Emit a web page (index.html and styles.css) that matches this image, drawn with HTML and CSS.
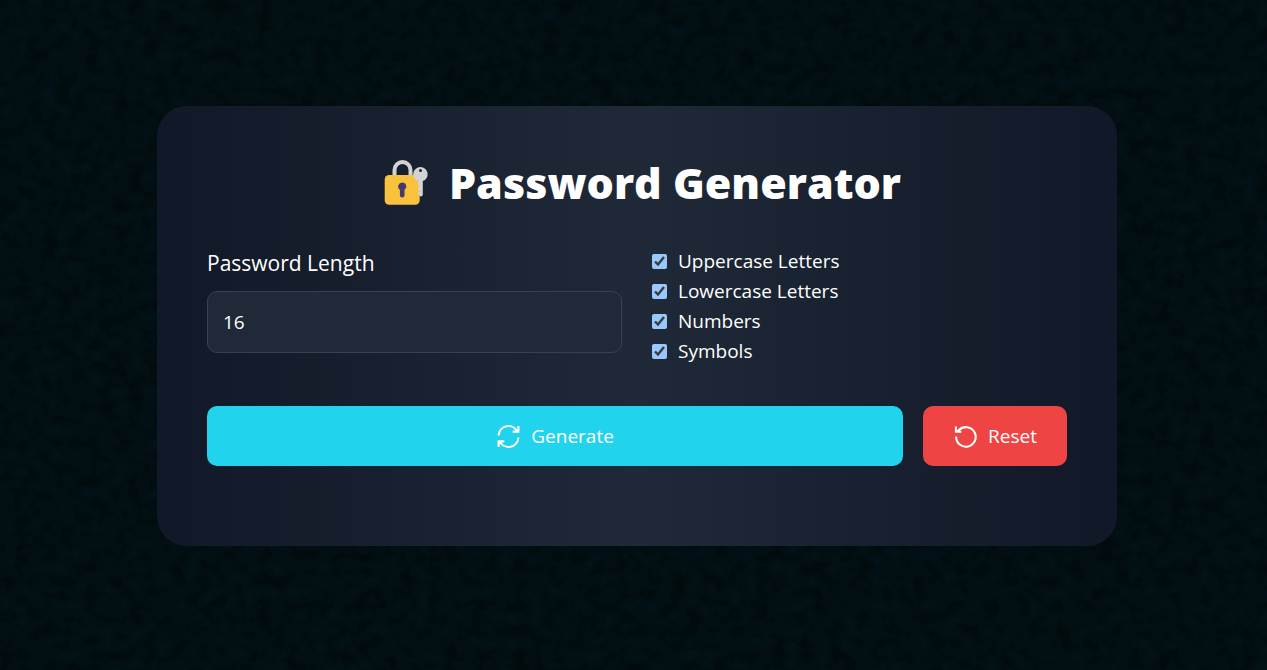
FILE: index.html
```html
<!DOCTYPE html>
<html lang="en">
<head>
<meta charset="utf-8">
<meta name="viewport" content="width=device-width, initial-scale=1">
<title>Password Generator</title>
<link rel="stylesheet" href="styles.css">
</head>
<body>
<svg class="texture" aria-hidden="true">
  <filter id="grain" x="0" y="0" width="100%" height="100%" color-interpolation-filters="sRGB">
    <feTurbulence type="fractalNoise" baseFrequency="0.07 0.08" numOctaves="6" seed="4"/>
    <feColorMatrix values="0 0 0 0 0  0 0 0 0 0.02  0 0 0 0 0.02  1.2 1 0 0 -0.75"/>
  </filter>
  <rect width="100%" height="100%" filter="url(#grain)"/>
</svg>
<main class="page">
  <section class="card">
    <h1 class="title">
      <svg class="title-icon" viewBox="-6 6 60 54" aria-hidden="true">
        <path d="M15.500 28V20a8 8 0 0 1 16 0V28" fill="none" stroke="#d3d3d3" stroke-width="4"/>
        <rect x="5.700" y="25" width="35" height="29.800" rx="4.500" fill="#f9c23c"/>
        <path fill="#d3d3d3" fill-rule="evenodd" d="M41.500 17a7.200 7.200 0 0 1 2.300 14V45.200l-1.800 1.600-3-2.200V42.500l1.700-1-1.700-1.400V37.800l1.300-1-1.300-1.500V31a7.200 7.200 0 0 1 2.500-14z"/>
        <circle cx="41.500" cy="20.500" r="1.500" fill="#1b2636"/>
        <path fill="#433b6b" d="M23.300 32.500a4 4 0 0 1 2.200 7.300V45.300a2.300 2.300 0 0 1-4.600 0V39.800a4 4 0 0 1 2.400-7.300z"/>
      </svg>
      Password Generator
    </h1>
    <form class="form">
      <div class="options">
        <div class="field">
          <label class="field-label" for="length">Password Length</label>
          <input class="field-input" id="length" type="text" inputmode="numeric" value="16">
        </div>
        <div class="checks">
          <label class="check"><input class="check-box" type="checkbox" checked>Uppercase Letters</label>
          <label class="check"><input class="check-box" type="checkbox" checked>Lowercase Letters</label>
          <label class="check"><input class="check-box" type="checkbox" checked>Numbers</label>
          <label class="check"><input class="check-box" type="checkbox" checked>Symbols</label>
        </div>
      </div>
      <div class="actions">
        <button class="button button-generate" type="button">
          <svg class="button-icon" viewBox="0 0 24 24" aria-hidden="true"><path d="M2.500 11A9.500 9.500 0 0 1 20.500 7.300M21.500 2v5.300h-5.500M21.500 13A9.500 9.500 0 0 1 3.500 16.700M2.500 22v-5.300h5.500"/></svg>
          Generate
        </button>
        <button class="button button-reset" type="button">
          <svg class="button-icon" viewBox="0 0 24 24" aria-hidden="true"><path d="M3 12A9.400 9.400 0 1 0 5.500 6L3.500 7.500M2.800 2.300v5.200h5.200"/></svg>
          Reset
        </button>
      </div>
    </form>
  </section>
</main>
</body>
</html>
```
FILE: styles.css
```css
* {
  box-sizing: border-box;
}

body {
  margin: 0;
  min-height: 100vh;
  background: #031217;
  color: #fff;
  font-family: "Segoe UI", "Open Sans", "Noto Sans", sans-serif;
  font-size: 19px;
  line-height: 30px;
}

.texture {
  position: fixed;
  inset: 0;
  z-index: -1;
  width: 100%;
  height: 100%;
  opacity: 0.6;
}

.page {
  display: flex;
  justify-content: center;
  align-items: center;
  min-height: 100vh;
  padding: 20px 0 38px 7px;
}

.card {
  width: 100%;
  max-width: 960px;
  padding: 50px 50px 80px;
  border-radius: 30px;
  background: linear-gradient(to right, #111827, #1f2937, #111827);
}

.title {
  display: flex;
  justify-content: center;
  align-items: center;
  gap: 16px;
  margin: 0 0 36px;
  font-size: 43px;
  font-weight: 800;
  line-height: 54px;
}

.title-icon {
  width: 60px;
  height: 54px;
}

.options {
  display: grid;
  grid-template-columns: repeat(auto-fit, minmax(300px, 1fr));
  gap: 30px;
  margin-bottom: 40px;
}

.field-label {
  display: block;
  margin-bottom: 10px;
  font-size: 21px;
  line-height: 35px;
}

.field-input {
  width: 100%;
  height: 62px;
  padding: 0 15px;
  border: 1px solid #374151;
  border-radius: 10px;
  background: #1f2937;
  color: #fff;
  font: inherit;
}

.check {
  display: flex;
  align-items: center;
  gap: 11px;
}

.check-box {
  width: 15px;
  height: 15px;
  margin: 0;
  color-scheme: dark;
}

.actions {
  display: flex;
  gap: 20px;
}

.button {
  display: flex;
  justify-content: center;
  align-items: center;
  gap: 10px;
  height: 60px;
  padding: 0 30px;
  border: 0;
  border-radius: 10px;
  color: #fff;
  font: inherit;
}

.button-generate {
  flex: 1;
  background: #22d3ee;
}

.button-reset {
  background: #ef4444;
}

.button-icon {
  width: 25px;
  height: 25px;
  fill: none;
  stroke: currentColor;
  stroke-width: 2;
}
```
